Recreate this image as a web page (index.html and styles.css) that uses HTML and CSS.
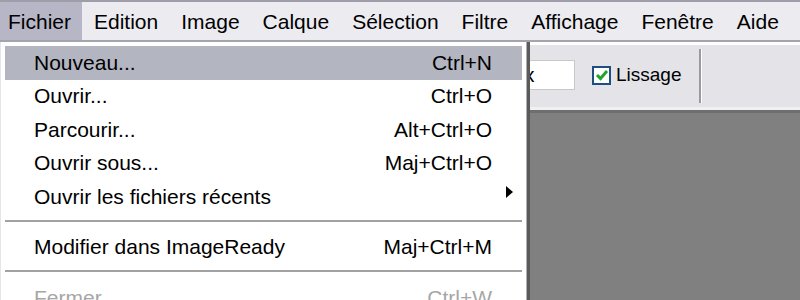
FILE: index.html
```html
<!DOCTYPE html>
<html lang="fr">
<head>
<meta charset="utf-8">
<link rel="stylesheet" href="styles.css">
</head>
<body>
<div class="app">
  <div class="menubar">
    <span class="mb-item active">Fichier</span>
    <span class="mb-item">Edition</span>
    <span class="mb-item">Image</span>
    <span class="mb-item">Calque</span>
    <span class="mb-item">Sélection</span>
    <span class="mb-item">Filtre</span>
    <span class="mb-item">Affichage</span>
    <span class="mb-item">Fenêtre</span>
    <span class="mb-item">Aide</span>
  </div>
  <div class="toolbar">
    <div class="field">x</div>
    <label class="check"><span class="box"><svg width="14" height="14" viewBox="0 0 14 14"><path d="M2 7 L5.5 10.5 L12 3" fill="none" stroke="#1fa62a" stroke-width="3"/></svg></span>Lissage</label>
    <div class="tsep"></div>
  </div>
  <div class="canvas"></div>

  <div class="menu">
    <div class="item hl"><span>Nouveau...</span><span class="sc">Ctrl+N</span><span></span></div>
    <div class="item"><span>Ouvrir...</span><span class="sc">Ctrl+O</span><span></span></div>
    <div class="item"><span>Parcourir...</span><span class="sc">Alt+Ctrl+O</span><span></span></div>
    <div class="item"><span>Ouvrir sous...</span><span class="sc">Maj+Ctrl+O</span><span></span></div>
    <div class="item"><span>Ouvrir les fichiers récents</span><span class="sc"></span><span class="arrow"></span></div>
    <div class="sep"></div>
    <div class="item"><span>Modifier dans ImageReady</span><span class="sc">Maj+Ctrl+M</span><span></span></div>
    <div class="sep"></div>
    <div class="item disabled"><span>Fermer</span><span class="sc">Ctrl+W</span><span></span></div>
  </div>
</div>
</body>
</html>
```

FILE: styles.css
```css
html, body {
  margin: 0;
  padding: 0;
}
body {
  width: 800px;
  height: 300px;
  overflow: hidden;
  font-family: "Liberation Sans", Arial, sans-serif;
  font-size: 21px;
  color: #000;
  background: #808080;
}
.app {
  position: relative;
  width: 800px;
  height: 300px;
  overflow: hidden;
  display: flex;
  flex-direction: column;
}
.menubar {
  height: 38px;
  border-top: 2px solid #9e9eaa;
  border-bottom: 2px solid #a4a4ac;
  background: #ebebf0;
  display: flex;
  align-items: stretch;
}
.mb-item {
  display: flex;
  align-items: center;
  padding: 0 11px 0 12px;
  line-height: 1;
  white-space: nowrap;
}
.mb-item:first-child {
  padding-left: 8px;
  padding-right: 11px;
}
.mb-item.active {
  background: #b6b6c6;
}
.toolbar {
  height: 62px;
  border-top: 3px solid #ffffff;
  border-bottom: 3px solid #f0f0f3;
  background: #e3e3e8;
  display: flex;
  align-items: center;
  padding-left: 503px;
  box-shadow: 0 3px 0 #6e6e6e;
}
.field {
  width: 60px;
  height: 30px;
  background: #fff;
  border: 1px solid #c8c8cc;
  display: flex;
  align-items: center;
  padding-left: 8px;
  box-sizing: border-box;
  margin-left: 12px;
  margin-top: -2px;
}
.check {
  display: flex;
  align-items: center;
  margin-left: 17px;
  gap: 5px;
  margin-top: -2px;
  font-size: 19px;
}
.box {
  width: 15px;
  height: 15px;
  border: 2px solid #1d4f80;
  background: #fff;
  display: flex;
  align-items: center;
  justify-content: center;
}
.tsep {
  width: 2px;
  height: 54px;
  background: #9a9aa0;
  border-right: 1px solid #fff;
  margin-left: 17px;
}
.canvas {
  flex: 1;
  background: #808080;
  margin-top: 3px;
}
.menu {
  position: absolute;
  left: 0;
  top: 42px;
  width: 527px;
  height: 258px;
  overflow: hidden;
  background: #fff;
  border-left: 1px solid #e6e6ea;
  border-right: 1px solid #b0b0b6;
  box-shadow: 3px 0 0 #5a5a5a;
  padding: 4px 4px 0 4px;
  box-sizing: border-box;
}
.item {
  display: grid;
  grid-template-columns: 1fr auto 30px;
  align-items: center;
  height: 33.5px;
  padding-left: 29px;
  white-space: nowrap;
}
.item.hl {
  background: #b3b5c0;
}
.item.disabled {
  color: #a6a6a6;
}
.sc {
  text-align: right;
}
.arrow {
  width: 0;
  height: 0;
  border-top: 6px solid transparent;
  border-bottom: 6px solid transparent;
  border-left: 7px solid #000;
  margin-left: 14px;
  margin-top: -10px;
}
.sep {
  height: 2px;
  background: #a2a2a2;
  margin: 6px 0 9px 0;
}
```
